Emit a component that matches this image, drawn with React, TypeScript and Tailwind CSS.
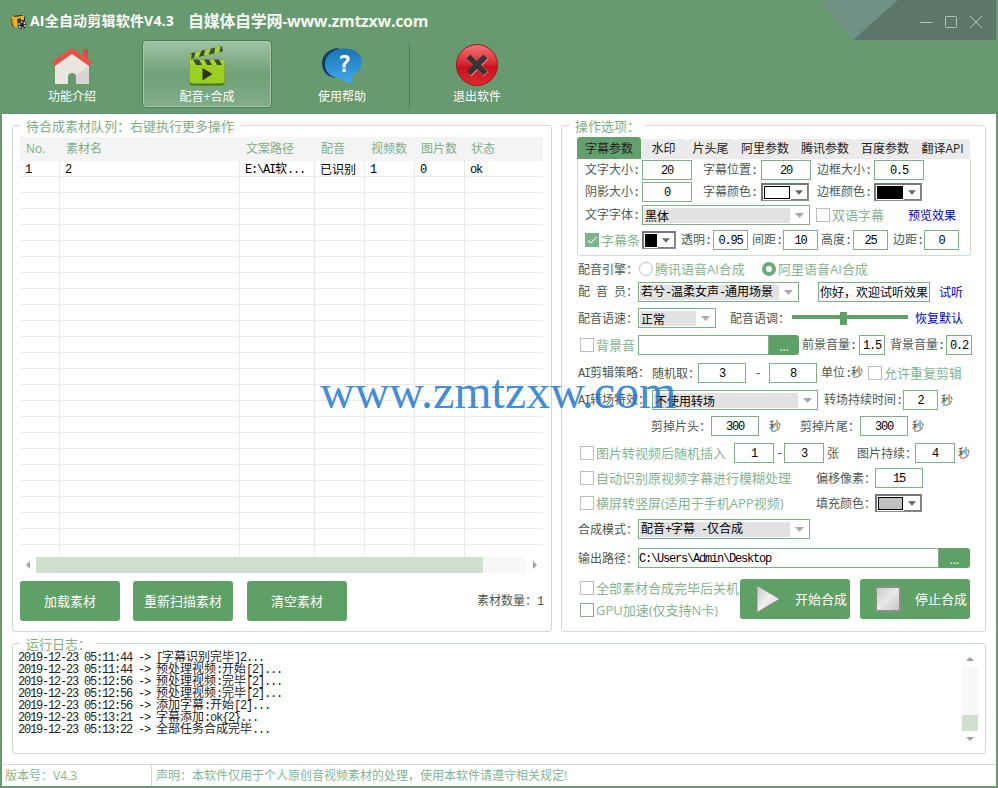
import type { ReactNode } from "react";
import clsx from "clsx";

const SONG = "font-['Noto_Sans_CJK_SC',sans-serif] text-[12px]";
const UI = "font-['Open_Sans','Noto_Sans_CJK_SC',sans-serif]";

interface TextProps {
  children: string;
  className?: string;
}

// Half-width characters sit on a 6px grid, CJK characters on a 12px grid
function Txt({ children, className }: TextProps) {
  return (
    <span className={clsx(SONG, "shrink-0 whitespace-pre", className)}>
      {children.split(/([\x20-\x7e]+)/).map((part, i) =>
        i % 2 ? (
          <span key={i} className="font-['Liberation_Mono',monospace] text-[12px] tracking-[-1.2px]">
            {part}
          </span>
        ) : (
          part
        )
      )}
    </span>
  );
}

function Label({ children, className }: TextProps) {
  return <Txt className={clsx("text-[#4d5a54]", className)}>{children}</Txt>;
}

function Link({ children, className }: TextProps) {
  return <Txt className={clsx("text-[#0000c0]", className)}>{children}</Txt>;
}

function Field({ value, className, left }: { value: string; className: string; left?: boolean }) {
  return (
    <div
      className={clsx(
        "flex h-5 shrink-0 items-center border border-[#7fae88] bg-white",
        left ? "justify-start" : "justify-center",
        className
      )}
    >
      <Txt className="leading-[18px] text-black">{value}</Txt>
    </div>
  );
}

function Arrow({ className }: { className?: string }) {
  return (
    <svg viewBox="0 0 9 5" className={clsx("h-[5px] shrink-0", className)}>
      <path d="M0 0H9L4.5 5Z" fill="currentColor" />
    </svg>
  );
}

function Select({ value, className }: { value: string; className: string }) {
  return (
    <div className={clsx("flex h-5 shrink-0 items-center border border-[#7fae88] bg-white pl-px", className)}>
      <div className="flex h-[15px] flex-1 items-center bg-[#e2e2e2] pl-px">
        <Txt className="leading-[15px] text-black">{value}</Txt>
      </div>
      <div className="flex w-[19px] justify-center">
        <Arrow className="w-[9px] text-[#a9a9a9]" />
      </div>
    </div>
  );
}

function ColorPick({ fill, className }: { fill: string; className: string }) {
  return (
    <div
      className={clsx(
        "flex h-[18px] shrink-0 items-stretch border border-t-2 border-l-2 border-[#777] border-r-[#8c8c8c] border-b-[#8c8c8c] bg-white",
        className
      )}
    >
      <div className={clsx("m-px flex-1 border border-black", fill)} />
      <div className="flex w-[17px] items-center justify-center border-r border-b border-[#808080] pt-px">
        <Arrow className="w-[8px] text-[#666]" />
      </div>
    </div>
  );
}

function Check({ label, className, checked, strong }: { label: string; className?: string; checked?: boolean; strong?: boolean }) {
  return (
    <div className={clsx("flex shrink-0 items-center", className)}>
      <span
        className={clsx(
          "flex h-[14px] w-[14px] shrink-0 items-center justify-center border",
          checked ? "border-[#7db488] bg-[#7db488]" : strong ? "border-[#8fa896]" : "border-[#bdbdbd]"
        )}
      >
        {checked && (
          <svg viewBox="0 0 12 12" className="h-3 w-3" fill="none" stroke="#e9f4eb" strokeWidth="1.1">
            <path d="M2 6.5L4.8 9L10.5 2.8" />
          </svg>
        )}
      </span>
      <span className={clsx(UI, "ml-[2px] pt-px text-[13px] whitespace-nowrap text-[#86b491]")}>{label}</span>
    </div>
  );
}

function Radio({ label, className, checked }: { label: string; className?: string; checked?: boolean }) {
  return (
    <div className={clsx("flex shrink-0 items-center", className)}>
      <span
        className={clsx(
          "h-[14px] w-[14px] shrink-0 rounded-full bg-white",
          checked ? "border-4 border-[#6fa87a]" : "border border-[#bdbdbd]"
        )}
      />
      <span className={clsx(UI, "ml-[2px] pt-px text-[13px] whitespace-nowrap text-[#86b491]")}>{label}</span>
    </div>
  );
}

function Row({ children, className }: { children: ReactNode; className?: string }) {
  return <div className={clsx("flex h-5 items-center", className)}>{children}</div>;
}

function Group({ title, titleClass, className, children }: { title: string; titleClass: string; className: string; children: ReactNode }) {
  return (
    <section className={clsx("relative rounded-[3px] border border-[#cfdcd1]", className)}>
      <h2
        className={clsx(
          UI,
          "absolute left-[7px] -top-[9px] h-[18px] bg-white pl-[6px] text-[13px] leading-[18px] whitespace-nowrap text-[#7fae88]",
          titleClass
        )}
      >
        {title}
      </h2>
      {children}
    </section>
  );
}

function HouseIcon() {
  return (
    <svg viewBox="0 -1 40 40" className="h-10 w-10">
      <path d="M3 18L20 5L37 18V38H24V31A4 4 0 0 0 16 31V38H3Z" fill="#e9e6e2" />
      <path d="M37 20V38H24V29Z" fill="#d9d5cf" />
      <path d="M31 3H36V13L31 9Z" fill="#d84a43" />
      <path d="M20 2L40 15.500L37 20L20 8L3 20L0 15.500Z" fill="#e5534b" />
    </svg>
  );
}

function ClapperIcon() {
  return (
    <svg viewBox="0 -2 40 44" className="h-11 w-10">
      <g transform="rotate(-13 3 14)">
        <rect x="3" y="8.500" width="34" height="5.500" rx="1" fill="#3d4a35" />
        <path d="M3 9h3l-2 5h-1zM10 8.500h6l-4 5.500h-5zM20 8.500h6l-4 5.500h-5zM30 8.500h6l-3 5.500h-5z" fill="#a6d62c" />
      </g>
      <rect x="2.500" y="17" width="35" height="23.500" rx="3" fill="#4c7418" />
      <rect x="2.500" y="16" width="35" height="22.500" rx="3" fill="#9bcf22" />
      <rect x="3" y="14.500" width="34" height="5.500" rx="1" fill="#3d4a35" />
      <path d="M3 14.500h3l3 5.500h-5l-1-1zM12 14.500h5l3 5.500h-5zM22 14.500h5l3 5.500h-5zM32 14.500h5v5.500h-2z" fill="#a6d62c" />
      <path d="M15.500 23L25.500 29L15.500 35.500Z" fill="#2d3323" />
    </svg>
  );
}

function HelpIcon() {
  return (
    <svg viewBox="0 -1 42 42" className="h-[42px] w-[42px]">
      <defs>
        <linearGradient id="bubble" x1="0" y1="0" x2="0" y2="1">
          <stop offset="0" stopColor="#1c72b4" />
          <stop offset="1" stopColor="#44abe8" />
        </linearGradient>
      </defs>
      <path d="M19 3C8 3 1 10 1 18C1 24 4 29 8 31L14 33L12 7Z" fill="#123c63" />
      <path
        d="M23 3.500C34 3.500 41 9 41 17C41 23 37 28 31 31C30 34 30 36 33 38C28 39 23 37 19 33C10 33 4 27 4 19C4 10 12 3.500 23 3.500Z"
        fill="url(#bubble)"
      />
      <text x="23.500" y="27" textAnchor="middle" className="font-['DejaVu_Sans_Mono',monospace] text-[23px] font-bold" fill="#fff">
        ?
      </text>
    </svg>
  );
}

function ExitIcon() {
  return (
    <svg viewBox="0 0 44 44" className="h-11 w-11">
      <defs>
        <linearGradient id="ball" x1="0" y1="0" x2="0" y2="1">
          <stop offset="0" stopColor="#f0767a" />
          <stop offset=".45" stopColor="#dd2b35" />
          <stop offset=".55" stopColor="#c90f1c" />
          <stop offset="1" stopColor="#df2a31" />
        </linearGradient>
      </defs>
      <circle cx="22" cy="22" r="20.500" fill="url(#ball)" stroke="#a3141c" />
      <path d="M14 14L31 31M31 14L14 31" stroke="#f09a9c" strokeWidth="6.500" />
      <path d="M13.500 13.500L30.500 30.500M30.500 13.500L13.500 30.500" stroke="#3a3233" strokeWidth="6" />
    </svg>
  );
}

function AppIcon() {
  return (
    <svg viewBox="0 0 17 16" className="mt-[3px] h-4 w-[17px]">
      <path d="M1 2L12 1L15 3V8L4 13L2 12Z" fill="#2e2a20" />
      <path d="M1 1.500L9 4L7 14L3 12Z" fill="#e8a91c" />
      <path d="M5 3L14 1.500V6L9 6.500L8 13L5 12Z" fill="#e9b52a" />
      <path d="M7 5L11 4V8L8 12Z" fill="#453517" />
      <circle cx="12" cy="11" r="4.300" fill="#272b2d" />
      <circle cx="12" cy="11" r="3" fill="none" stroke="#d7dbd9" strokeWidth="1.500" strokeDasharray="1.800 1.300" />
    </svg>
  );
}

function Tool({ icon, label, active }: { icon: ReactNode; label: string; active?: boolean }) {
  return (
    <div
      className={clsx(
        "flex h-[68px] w-[130px] flex-col items-center rounded-[4px] border",
        active
          ? "border-[#4b7c55] bg-linear-to-b from-[#a0c2a4] via-[#70a178] to-[#81ac87] shadow-[inset_0_0_0_1px_#a9c8ad]"
          : "border-transparent"
      )}
    >
      <div className="mt-px flex h-[46px] items-center justify-center">{icon}</div>
      <span className={clsx(UI, "text-[12px] leading-[18px] text-white")}>{label}</span>
    </div>
  );
}

const COLS = ["w-[40px]", "w-[180px]", "w-[75px]", "w-[50px]", "w-[50px]", "w-[50px]", "w-[78px]"];
const HEADS = ["No.", "素材名", "文案路径", "配音", "视频数", "图片数", "状态"];
const FIRST = ["1", "2", "E:\\AI软...", "已识别", "1", "0", "ok"];

function MaterialTable() {
  return (
    <div className="mt-[11px] ml-[7px] w-[523px]">
      <div className="flex h-6 items-center bg-[#f4f4f4]">
        {HEADS.map((h, i) => (
          <div key={h} className={clsx(UI, COLS[i], "pl-[6px] text-[12px] whitespace-nowrap text-[#7fae88]")}>
            {h}
          </div>
        ))}
      </div>
      {Array.from({ length: 25 }, (_, r) => (
        <div key={r} className={clsx("flex", r < 24 ? "h-4 border-b border-[#e9ebe9]" : "h-3")}>
          {COLS.map((w, i) => (
            <div key={w + i} className={clsx(w, "flex items-center pl-[5px]", i < 6 && "border-r border-[#e9ebe9]")}>
              {r === 0 && <Txt className="leading-[15px] text-black">{FIRST[i]}</Txt>}
            </div>
          ))}
        </div>
      ))}
    </div>
  );
}

function GreenButton({ children }: { children: string }) {
  return (
    <button className={clsx(UI, "h-10 w-[100px] rounded-[3px] bg-[#5fa067] pt-[2px] text-[13px] text-white")}>{children}</button>
  );
}

const TABS = [
  { name: "字幕参数", w: "w-[64px]" },
  { name: "水印", w: "w-[45px]" },
  { name: "片头尾", w: "w-[49px]" },
  { name: "阿里参数", w: "w-[60px]" },
  { name: "腾讯参数", w: "w-[60px]" },
  { name: "百度参数", w: "w-[60px]" },
  { name: "翻译API", w: "w-[55px]" },
];

function SubtitleTab() {
  return (
    <div className="h-[97px] w-[394px] rounded-b-[3px] border border-t-0 border-[#cbdccd] pl-[7px]">
      <Row className="pt-[2px]">
        <Label className="w-[57px]">文字大小:</Label>
        <Field value="20" className="mr-[11px] w-[50px]" />
        <Label className="w-[58px]">字幕位置:</Label>
        <Field value="20" className="mr-[6px] w-[50px]" />
        <Label className="w-[57px]">边框大小:</Label>
        <Field value="0.5" className="w-[50px]" />
      </Row>
      <Row className="mt-[3px]">
        <Label className="w-[57px]">阴影大小:</Label>
        <Field value="0" className="mr-[11px] w-[50px]" />
        <Label className="w-[58px]">字幕颜色:</Label>
        <ColorPick fill="bg-white" className="mr-[8px] w-[48px]" />
        <Label className="w-[57px]">边框颜色:</Label>
        <ColorPick fill="bg-black" className="w-[48px]" />
      </Row>
      <Row className="mt-[3px]">
        <Label className="w-[57px]">文字字体:</Label>
        <Select value="黑体" className="mr-[6px] w-[168px]" />
        <Check label="双语字幕" className="w-[92px]" />
        <Link>预览效果</Link>
      </Row>
      <Row className="mt-[5px]">
        <Check label="字幕条" checked className="w-[57px]" />
        <ColorPick fill="bg-black" className="mr-[5px] w-[34px]" />
        <Label className="w-[32px]">透明:</Label>
        <Field value="0.95" className="mr-[4px] w-[35px]" />
        <Label className="w-[31px]">间距:</Label>
        <Field value="10" className="mr-[3px] w-[35px]" />
        <Label className="w-[32px]">高度:</Label>
        <Field value="25" className="mr-[5px] w-[35px]" />
        <Label className="w-[31px]">边距:</Label>
        <Field value="0" className="w-[35px]" />
      </Row>
    </div>
  );
}

function OptionsPanel() {
  return (
    <Group title="操作选项：" titleClass="w-[76px]" className="h-[507px] w-[425px]">
      <div className="mt-[11px] ml-[15px]">
        <div className="flex h-[22px] w-[394px] items-end">
          {TABS.map((t, i) => (
            <div
              key={t.name}
              className={clsx(
                UI,
                t.w,
                "flex shrink-0 items-center justify-center text-[12px] whitespace-nowrap text-[#222]",
                i === 0 ? "h-[22px] rounded-t-[3px] bg-[#64a06d] pt-px" : "h-5 rounded-t-[3px] bg-[#ebebeb]"
              )}
            >
              {t.name}
            </div>
          ))}
        </div>
        <SubtitleTab />
      </div>
      <div className="pl-4">
        <Row className="mt-[3px]">
          <Label className="w-[61px]">配音引擎：</Label>
          <Radio label="腾讯语音AI合成" className="w-[123px]" />
          <Radio label="阿里语音AI合成" checked />
        </Row>
        <Row className="mt-[3px]">
          <Label className="w-[60px]">配 音 员：</Label>
          <Select value="若兮-温柔女声-通用场景" className="mr-[19px] w-[161px]" />
          <Field value="你好，欢迎试听效果" left className="mr-[9px] w-[112px] pl-px" />
          <Link>试听</Link>
        </Row>
        <Row className="mt-[6px]">
          <Label className="w-[60px]">配音语速：</Label>
          <Select value="正常" className="mr-[14px] w-[78px]" />
          <Label className="w-[62px]">配音语调：</Label>
          <div className="mr-[7px] flex h-[13px] w-[116px] shrink-0 items-center">
            <div className="mb-[2px] h-1 w-[48px] bg-[#5fa067]" />
            <div className="h-[13px] w-[7px] bg-[#5fa067]" />
            <div className="mb-[2px] h-1 flex-1 bg-[#5fa067]" />
          </div>
          <Link>恢复默认</Link>
        </Row>
        <Row className="mt-[7px] pl-[2px]">
          <Check label="背景音" className="w-[58px]" />
          <Field value="" className="w-[131px]" />
          <button className={clsx(UI, "mr-[3px] h-5 w-[30px] shrink-0 rounded-r-[3px] bg-[#5fa067] pt-[3px] text-[12px] leading-[17px] text-white")}>
            ...
          </button>
          <Label className="w-[57px]">前景音量:</Label>
          <Field value="1.5" className="mr-[5px] w-[26px]" />
          <Label className="w-[56px]">背景音量:</Label>
          <Field value="0.2" className="w-[26px]" />
        </Row>
        <Row className="mt-[8px]">
          <Label className="w-[74px]">AI剪辑策略：</Label>
          <Label className="w-[46px]">随机取：</Label>
          <Field value="3" className="w-[48px]" />
          <Label className="w-[23px] text-center">-</Label>
          <Field value="8" className="mr-[4px] w-[48px]" />
          <Label className="w-[47px]">单位:秒</Label>
          <Check label="允许重复剪辑" />
        </Row>
        <Row className="mt-[7px]">
          <Label className="w-[74px]">AI转场特效：</Label>
          <Select value="不使用转场" className="mr-[6px] w-[166px]" />
          <Label className="w-[79px]">转场持续时间:</Label>
          <Field value="2" className="mr-[3px] w-[35px]" />
          <Label>秒</Label>
        </Row>
        <Row className="mt-[6px] pl-[73px]">
          <Label className="w-[60px]">剪掉片头：</Label>
          <Field value="300" className="mr-[10px] w-[48px]" />
          <Label className="w-[31px]">秒</Label>
          <Label className="w-[60px]">剪掉片尾：</Label>
          <Field value="300" className="mr-[4px] w-[48px]" />
          <Label>秒</Label>
        </Row>
        <Row className="mt-[7px] pl-[2px]">
          <Check label="图片转视频后随机插入" className="w-[154px]" />
          <Field value="1" className="w-[40px]" />
          <Label className="w-[10px] text-center">-</Label>
          <Field value="3" className="mr-[3px] w-[40px]" />
          <Label className="w-[30px]">张</Label>
          <Label className="w-[58px]">图片持续：</Label>
          <Field value="4" className="mr-[3px] w-[40px]" />
          <Label>秒</Label>
        </Row>
        <Row className="mt-[5px] pl-[2px]">
          <Check label="自动识别原视频字幕进行模糊处理" className="w-[236px]" />
          <Label className="w-[59px]">偏移像素：</Label>
          <Field value="15" className="w-[48px]" />
        </Row>
        <Row className="mt-[5px] pl-[2px]">
          <Check label="横屏转竖屏(适用于手机APP视频)" className="w-[236px]" />
          <Label className="w-[59px]">填充颜色：</Label>
          <ColorPick fill="bg-[#c0c0c0]" className="w-[47px]" />
        </Row>
        <Row className="mt-[6px]">
          <Label className="w-[60px]">合成模式：</Label>
          <Select value="配音+字幕 -仅合成" className="w-[172px]" />
        </Row>
        <Row className="mt-[9px]">
          <Label className="w-[60px]">输出路径：</Label>
          <Field value="C:\Users\Admin\Desktop" left className="w-[301px]" />
          <button className={clsx(UI, "h-5 w-[31px] shrink-0 rounded-r-[3px] bg-[#5fa067] pt-[3px] text-[12px] leading-[17px] text-white")}>
            ...
          </button>
        </Row>
        <div className="mt-[11px] flex pl-[2px]">
          <div className="w-[160px] shrink-0">
            <Check label="全部素材合成完毕后关机" className="h-[18px]" />
            <Check label="GPU加速(仅支持N卡)" strong className="mt-1 h-[18px]" />
          </div>
          <button className={clsx(UI, "mr-[10px] flex h-10 w-[110px] shrink-0 items-center rounded-[3px] bg-[#5fa067] text-[13px] text-white")}>
            <svg viewBox="0 0 28 32" className="ml-[14px] h-8 w-7">
              <defs>
                <linearGradient id="metal" x1="0" y1="0" x2="1" y2="1">
                  <stop offset="0" stopColor="#c9c9c9" />
                  <stop offset=".5" stopColor="#f0f0f0" />
                  <stop offset="1" stopColor="#c4c4c4" />
                </linearGradient>
              </defs>
              <path d="M3 2.500L26 16L3 29.500Z" fill="url(#metal)" stroke="#858985" />
            </svg>
            <span className="ml-[13px] pt-[2px] whitespace-nowrap">开始合成</span>
          </button>
          <button className={clsx(UI, "flex h-10 w-[110px] shrink-0 items-center rounded-[3px] bg-[#5fa067] text-[13px] text-white")}>
            <span className="ml-[15px] h-[26px] w-[26px] border-2 border-[#8a918b] bg-linear-to-br from-[#c9c9c9] via-[#e9e9e9] to-[#c6c6c6]" />
            <span className="ml-[14px] pt-[2px] whitespace-nowrap">停止合成</span>
          </button>
        </div>
      </div>
    </Group>
  );
}

const LOG = [
  "2019-12-23 05:11:44 -> [字幕识别完毕]2...",
  "2019-12-23 05:11:44 -> 预处理视频:开始[2]...",
  "2019-12-23 05:12:56 -> 预处理视频:完毕[2]...",
  "2019-12-23 05:12:56 -> 预处理视频:完毕[2]...",
  "2019-12-23 05:12:56 -> 添加字幕:开始[2]...",
  "2019-12-23 05:13:21 -> 字幕添加:ok{2}...",
  "2019-12-23 05:13:22 -> 全部任务合成完毕...",
];

export default function App() {
  return (
    <div className="relative flex h-[788px] w-[998px] flex-col overflow-hidden border-x-2 border-b-2 border-[#679a6e] bg-white">
      <header className="relative -mx-[2px] h-[114px] shrink-0 bg-[#679a6e]">
        <svg viewBox="0 0 178 40" className="absolute top-0 right-0 h-10 w-[178px]">
          <path d="M0 0H78L33 40Z" fill="#719184" />
          <path d="M78 0H178V40H33Z" fill="#5d766a" />
          <g fill="none" stroke="#b4c3bb">
            <path d="M100 22.500H112.500" />
            <rect x="125.500" y="16.500" width="11" height="11" rx="1" />
            <path d="M150 16L162 28M162 16L150 28" />
          </g>
        </svg>
        <div className="flex h-10 items-center pl-[10px]">
          <AppIcon />
          <span className={clsx(UI, "ml-[3px] w-[158px] pt-px text-[14px] font-bold tracking-[0.2px] whitespace-nowrap text-white")}>
            AI全自动剪辑软件V4.3
          </span>
          <span className={clsx(UI, "pt-px text-[16px] font-bold tracking-[-0.3px] whitespace-nowrap text-[#f4f8f4]")}>
            自媒体自学网-www.zmtzxw.com
          </span>
        </div>
        <div className="flex pl-[7px]">
          <Tool icon={<HouseIcon />} label="功能介绍" />
          <div className="w-[5px]" />
          <Tool icon={<ClapperIcon />} label="配音+合成" active />
          <div className="w-[5px]" />
          <Tool icon={<HelpIcon />} label="使用帮助" />
          <div className="mt-1 ml-[2px] h-16 w-px bg-[#4b7752]" />
          <div className="w-[2px]" />
          <Tool icon={<ExitIcon />} label="退出软件" />
        </div>
      </header>

      <main className="flex-1 px-[10px] pt-[11px]">
        <div className="flex gap-[9px]">
          <Group title="待合成素材队列：右键执行更多操作" titleClass="w-[220px]" className="h-[507px] w-[540px]">
            <MaterialTable />
            <div className="ml-[7px] flex h-4 w-[523px] items-center">
              <svg viewBox="0 0 16 16" className="h-4 w-4">
                <path d="M10 4V12L6 8Z" fill="#a3a3a3" />
              </svg>
              <div className="h-4 w-[490px] bg-[#f7f7f7]">
                <div className="h-4 w-[447px] bg-[#d1dfd1]" />
              </div>
              <svg viewBox="0 0 16 16" className="h-4 w-4">
                <path d="M7 4V12L11 8Z" fill="#a3a3a3" />
              </svg>
            </div>
            <div className="mt-2 ml-[7px] flex w-[523px] items-center">
              <GreenButton>加载素材</GreenButton>
              <div className="w-[13px]" />
              <GreenButton>重新扫描素材</GreenButton>
              <div className="w-[14px]" />
              <GreenButton>清空素材</GreenButton>
              <Label className="ml-auto">素材数量：1</Label>
            </div>
          </Group>
          <OptionsPanel />
        </div>

        <Group title="运行日志：" titleClass="w-[76px]" className="mt-[11px] flex h-[111px] w-[974px] justify-between">
          <div className="relative pt-[7px] pl-[5px]">
            {LOG.map((line, i) => (
              <div key={i} className="flex h-3 items-center">
                <Txt className="leading-3 text-[#222]">{line}</Txt>
              </div>
            ))}
          </div>
          <div className="mt-[7px] mr-[7px] flex w-4 flex-col items-center">
            <svg viewBox="0 0 16 16" className="h-4 w-4">
              <path d="M4 10H12L8 6Z" fill="#a3a3a3" />
            </svg>
            <div className="flex h-[64px] w-4 items-end bg-[#f7f7f7]">
              <div className="h-4 w-4 bg-[#d1dfd1]" />
            </div>
            <svg viewBox="0 0 16 16" className="h-4 w-4">
              <path d="M4 6H12L8 10Z" fill="#a3a3a3" />
            </svg>
          </div>
        </Group>
      </main>

      <footer className={clsx(UI, "flex h-[22px] shrink-0 items-center border-t border-[#d3dad4] text-[12px] text-[#86b491]")}>
        <div className="flex h-full w-[150px] items-center border-r border-[#d3dad4] pl-[3px]">版本号：V4.3</div>
        <div className="pl-[4px]">声明：本软件仅用于个人原创音视频素材的处理，使用本软件请遵守相关规定!</div>
      </footer>

      <div className="pointer-events-none absolute top-[365px] left-[318px] font-['Liberation_Serif',serif] text-[48px] leading-[54px] whitespace-nowrap text-[#2478cc] opacity-85">
        www.zmtzxw.com
      </div>
    </div>
  );
}
